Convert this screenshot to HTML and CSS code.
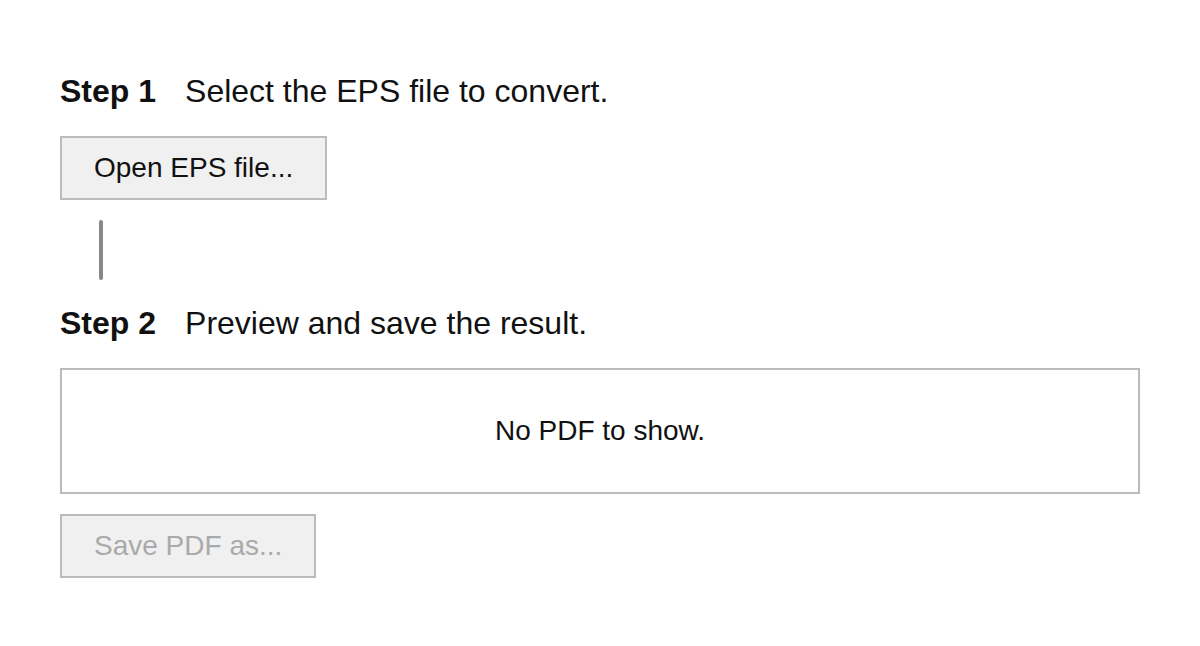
FILE: index.html
```html
<!DOCTYPE html>
<html>
<head>
<meta charset="utf-8">
<link rel="stylesheet" href="styles.css">
</head>
<body>
<main class="page">
  <h2 class="step"><span class="step-num">Step 1</span><span class="step-text">Select the EPS file to convert.</span></h2>
  <div class="actions"><button class="btn">Open EPS file...</button></div>
  <div class="connector"></div>
  <h2 class="step"><span class="step-num">Step 2</span><span class="step-text">Preview and save the result.</span></h2>
  <div class="preview">No PDF to show.</div>
  <div class="actions"><button class="btn" disabled>Save PDF as...</button></div>
</main>
</body>
</html>
```
FILE: styles.css
```css
html, body {
  margin: 0;
  padding: 0;
  background: #fff;
}
body {
  font-family: "Liberation Sans", Arial, sans-serif;
  color: #111;
}
.page {
  padding: 72px 60px 0 60px;
  display: flex;
  flex-direction: column;
  align-items: flex-start;
}
.step {
  margin: 0;
  font-size: 32px;
  font-weight: normal;
  line-height: 38px;
  display: flex;
  gap: 29px;
}
.step-num {
  font-weight: bold;
}
.actions {
  margin-top: 26px;
}
.btn {
  font-family: "Liberation Sans", Arial, sans-serif;
  font-size: 28px;
  color: #111;
  background: #f0f0f0;
  border: 2px solid #bbb;
  height: 64px;
  padding: 0 32px;
  border-radius: 0;
  margin: 0;
}
.btn:disabled {
  color: #aaa;
}
.connector {
  width: 4px;
  height: 60px;
  background: #888;
  border-radius: 2px;
  margin: 20px 0 24px 39px;
}
.preview {
  align-self: stretch;
  margin-top: 26px;
  height: 122px;
  border: 2px solid #bbb;
  display: flex;
  align-items: center;
  justify-content: center;
  font-size: 28px;
}
.preview + .actions {
  margin-top: 20px;
}
```
